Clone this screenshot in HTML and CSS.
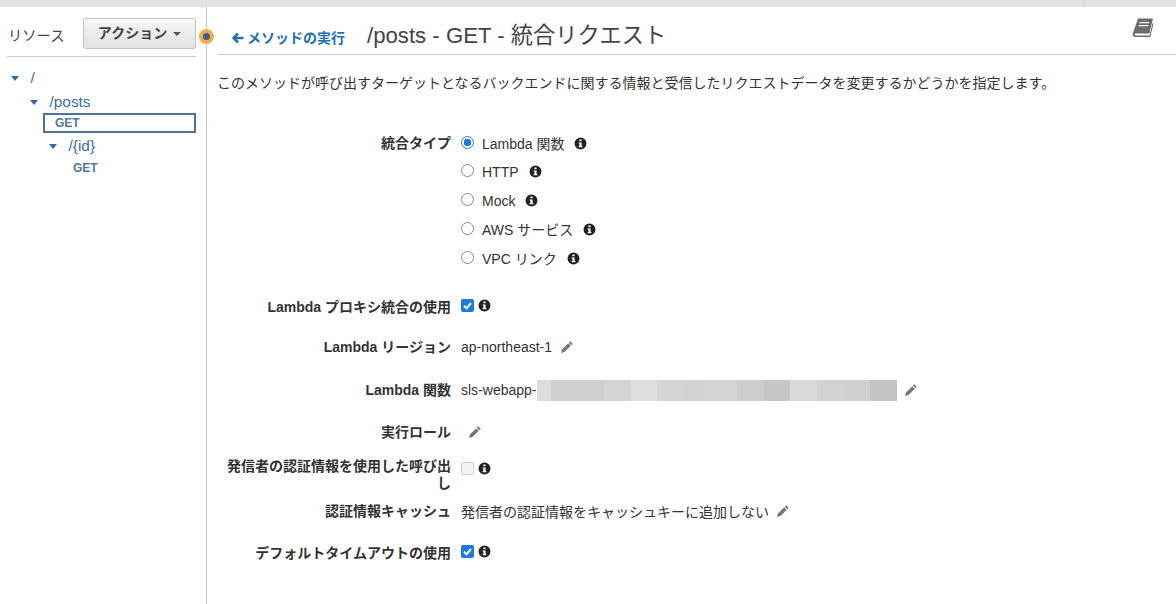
FILE: index.html
```html
<!DOCTYPE html>
<html lang="ja">
<head>
    <title>/posts - GET - 統合リクエスト</title>
    <link rel="stylesheet" href="styles.css">
</head>
<body>
    <svg class="defs" width="0" height="0">
        <symbol id="info" viewBox="0 0 12 12">
            <path fill-rule="evenodd" d="M6 .5a5.5 5.5 0 1 1 0 11 5.5 5.5 0 0 1 0-11zM5 2.2v1.7h2V2.2zM4.3 5v1.1H5v2.2h-.7v1.2h3.4V8.3H7V5z"/>
        </symbol>
        <symbol id="pencil" viewBox="0 0 14 14">
            <path d="M10.2 1.2l2.6 2.6-1.4 1.4-2.6-2.6zM8.2 3.2l2.6 2.6-6.3 6.3-3.4.8.8-3.4z"/>
        </symbol>
        <symbol id="check" viewBox="0 0 13 13">
            <path d="M3 6.8l2.5 2.5L10 4" fill="none" stroke="#fff" stroke-width="2"/>
        </symbol>
    </svg>

    <div class="top-bar"><span class="top-tick"></span></div>
    <div class="page-container">
        <aside class="sidebar">
            <div class="sidebar-head">
                <span class="sidebar-title">リソース</span>
                <button class="action-btn" type="button">アクション<span class="caret-small"></span></button>
            </div>
            <ul class="tree">
                <li class="tree-res"><span class="tree-caret"></span>/</li>
                <li class="tree-res level-1"><span class="tree-caret"></span>/posts</li>
                <li class="tree-method selected">GET</li>
                <li class="tree-res level-2"><span class="tree-caret"></span>/{id}</li>
                <li class="tree-method level-3">GET</li>
            </ul>
            <span class="resize-dot"></span>
        </aside>

        <main class="main">
            <div class="main-head">
                <a class="back-link" href="#"><span class="back-arrow">
                    <svg width="12" height="12" viewBox="0 0 12 12"><path d="M6 1.5L1.5 6 6 10.5M2 6h9.5" fill="none" stroke="currentColor" stroke-width="2.6"/></svg>
                </span>メソッドの実行</a>
                <h1>/posts - GET - 統合リクエスト</h1>
                <svg class="book" width="22" height="20" viewBox="0 0 22 20">
                    <path d="M6 .5h15l-3.6 15H3.6c-1.3 0-1.4 1.9 0 1.9h14l3-12.4.9.6-3.2 13.4H3.4C1 19 .3 17.4.8 15.4zM7.6 4l-.3 1.2h9.6l.3-1.2zM6.9 7l-.3 1.2h9.6l.3-1.2z" fill-rule="evenodd"/>
                </svg>
            </div>
            <p class="desc">このメソッドが呼び出すターゲットとなるバックエンドに関する情報と受信したリクエストデータを変更するかどうかを指定します。</p>

            <form class="settings">
                <div class="row row-type">
                    <div class="row-label">統合タイプ</div>
                    <div class="radio-list">
                        <label class="radio-item"><span class="radio on"></span>Lambda 関数<svg class="info"><use href="#info"/></svg></label>
                        <label class="radio-item"><span class="radio"></span>HTTP<svg class="info"><use href="#info"/></svg></label>
                        <label class="radio-item"><span class="radio"></span>Mock<svg class="info"><use href="#info"/></svg></label>
                        <label class="radio-item"><span class="radio"></span>AWS サービス<svg class="info"><use href="#info"/></svg></label>
                        <label class="radio-item"><span class="radio"></span>VPC リンク<svg class="info"><use href="#info"/></svg></label>
                    </div>
                </div>
                <div class="row row-proxy">
                    <div class="row-label">Lambda プロキシ統合の使用</div>
                    <div class="row-value"><span class="check on"><svg><use href="#check"/></svg></span><svg class="info tight"><use href="#info"/></svg></div>
                </div>
                <div class="row row-region">
                    <div class="row-label">Lambda リージョン</div>
                    <div class="row-value">ap-northeast-1<svg class="pencil"><use href="#pencil"/></svg></div>
                </div>
                <div class="row row-func">
                    <div class="row-label">Lambda 関数</div>
                    <div class="row-value">sls-webapp-<span class="blur">
                        <i class="b1"></i><i class="b2"></i><i class="b3"></i><i class="b4"></i><i class="b5"></i><i class="b6"></i><i class="b7"></i><i class="b8"></i><i class="b9"></i><i class="b10"></i><i class="b11"></i><i class="b12"></i><i class="b13"></i><i class="b14"></i>
                    </span><svg class="pencil"><use href="#pencil"/></svg></div>
                </div>
                <div class="row row-role">
                    <div class="row-label">実行ロール</div>
                    <div class="row-value"><svg class="pencil"><use href="#pencil"/></svg></div>
                </div>
                <div class="row row-caller">
                    <div class="row-label">発信者の認証情報を使用した呼び出し</div>
                    <div class="row-value"><span class="check"></span><svg class="info tight"><use href="#info"/></svg></div>
                </div>
                <div class="row row-cache">
                    <div class="row-label">認証情報キャッシュ</div>
                    <div class="row-value">発信者の認証情報をキャッシュキーに追加しない<svg class="pencil"><use href="#pencil"/></svg></div>
                </div>
                <div class="row row-timeout">
                    <div class="row-label">デフォルトタイムアウトの使用</div>
                    <div class="row-value"><span class="check on"><svg><use href="#check"/></svg></span><svg class="info tight"><use href="#info"/></svg></div>
                </div>
            </form>
        </main>
    </div>
</body>
</html>
```

FILE: styles.css
```css
* {
    margin: 0;
    padding: 0;
    box-sizing: border-box;
}

html, body {
    height: 100%;
    overflow: hidden;
}

body {
    font-family: 'Liberation Sans', 'Noto Sans CJK JP', sans-serif;
    font-size: 14px;
    color: #333;
    background: #fff;
}

.defs {
    position: absolute;
}

.top-bar {
    height: 7px;
    background: #e3e3e3;
    display: flex;
    justify-content: flex-end;
    padding-right: 91px;
}

.top-tick {
    width: 1px;
    background: #cfcfcf;
}

.page-container {
    display: flex;
    height: 597px;
}

/* left resource tree */
.sidebar {
    width: 207px;
    flex: none;
    padding: 10px 10px 0 7px;
    border-right: 1px solid #c8c8c8;
    position: relative;
}

.sidebar-head {
    display: flex;
    justify-content: space-between;
    align-items: flex-end;
    height: 40px;
    padding-bottom: 10px;
    padding-left: 1px;
    border-bottom: 1px solid #ccc;
}

.sidebar-title {
    font-size: 14.3px;
    line-height: 20px;
    color: #444;
}

.action-btn {
    width: 113px;
    height: 31px;
    margin-bottom: -3px;
    border: 1px solid #c4c4c4;
    border-radius: 3px;
    background: linear-gradient(#f6f6f6, #e2e2e2);
    font-family: inherit;
    font-size: 14px;
    font-weight: 700;
    color: #444;
    display: flex;
    align-items: center;
    justify-content: center;
    gap: 6px;
    padding-bottom: 3px;
}

.caret-small {
    border-left: 4px solid transparent;
    border-right: 4px solid transparent;
    border-top: 4px solid #555;
    margin-top: 3px;
}

.resize-dot {
    position: absolute;
    top: 22px;
    right: -8px;
    width: 15px;
    height: 15px;
    border-radius: 50%;
    background: #35619a;
    border: 4.5px solid #f2ac48;
}

.tree {
    list-style: none;
    color: #3d6d9e;
    padding-top: 9px;
}

.tree-res {
    height: 24px;
    line-height: 24px;
    font-size: 15.4px;
    display: flex;
    align-items: center;
    padding-left: 4px;
}

.tree-caret {
    width: 0;
    height: 0;
    margin-right: 11.5px;
    border-left: 4.5px solid transparent;
    border-right: 4.5px solid transparent;
    border-top: 5px solid #2f6aa8;
}

.level-1 {
    padding-left: 23px;
}

.level-2 {
    padding-left: 42px;
    margin-top: 1px;
}

.tree-method {
    font-size: 12px;
    font-weight: 700;
    color: #55779b;
    height: 20px;
    line-height: 18px;
}

.tree-method.selected {
    margin-left: 36px;
    padding-left: 10px;
    border: 2px solid #4f7297;
    margin-bottom: 1px;
    margin-top: -1px;
    line-height: 16px;
}

.tree-method.level-3 {
    padding-left: 66px;
    line-height: 20px;
}

/* main panel */
.main {
    flex: 1;
    padding: 0 0 0 11px;
}

.main-head {
    display: flex;
    align-items: flex-end;
    height: 48px;
    padding: 0 0 6px 14px;
    border-bottom: 1px solid #ccc;
    position: relative;
}

.back-link {
    display: flex;
    align-items: center;
    gap: 3px;
    font-size: 14px;
    font-weight: 700;
    color: #236fb3;
    text-decoration: none;
    margin-right: 22px;
    line-height: 20px;
}

.back-arrow {
    display: flex;
}

h1 {
    font-size: 22.2px;
    font-weight: 400;
    line-height: 30px;
    color: #444;
    margin-bottom: -3px;
}

.book {
    position: absolute;
    top: 11px;
    right: 22px;
    fill: #6c6c6c;
}

.desc {
    line-height: 20px;
    margin: 18px 0 0 -1px;
}

.settings {
    display: flex;
    flex-direction: column;
}

.row {
    display: grid;
    grid-template-columns: 233px 1fr;
    column-gap: 10px;
}

.row-label {
    font-weight: 700;
    text-align: right;
    line-height: 20px;
}

.row-value {
    display: flex;
    align-items: center;
    height: 20px;
}

.row-type {
    margin-top: 40px;
}

.radio-list {
    display: flex;
    flex-direction: column;
    gap: 8.75px;
}

.radio-item {
    display: flex;
    align-items: center;
    height: 20px;
}

.radio {
    width: 13px;
    height: 13px;
    border: 1px solid #8a8a8a;
    border-radius: 50%;
    background: #fff;
    margin-right: 8px;
    flex: none;
    margin-top: -2px;
}

.radio.on {
    border: 1px solid #1f7ae0;
    background: radial-gradient(circle, #1f7ae0 0 3.5px, #fff 4px);
}

.info {
    width: 13px;
    height: 13px;
    margin-left: 10px;
    fill: #222;
}

.info.tight {
    margin-left: 4px;
}

.check {
    width: 13px;
    height: 13px;
    border-radius: 2px;
    border: 1px solid #cfcfcf;
    background: #f4f4f4;
    display: block;
    margin-top: -4px;
}

.check.on {
    border: none;
    background: #1f7ae0;
}

.check svg {
    width: 13px;
    height: 13px;
    display: block;
}

.row-value .info {
    margin-top: -4px;
}

.pencil {
    width: 14px;
    height: 14px;
    margin-left: 7px;
    fill: #777;
}

.row-region .pencil,
.row-func .pencil {
    margin-left: 8px;
}

.row-proxy {
    margin-top: 29px;
}

.row-region {
    margin-top: 20px;
}

.row-func {
    margin-top: 23px;
}

.row-role {
    margin-top: 22px;
}

.row-caller {
    margin-top: 16px;
}

.row-caller .row-label {
    line-height: 17px;
}

.row-caller .row-value {
    height: 24px;
}

.row-cache {
    margin-top: 9px;
}

.row-timeout {
    margin-top: 22px;
}

/* blurred out function name */
.blur {
    display: flex;
    width: 359px;
    height: 21px;
    margin-left: 1px;
}

.blur i {
    flex: 1;
    background: #d2d2d2;
}

.blur .b1 { flex: 0.5; background: #dcdcdc; }
.blur .b2 { background: #cfcfcf; }
.blur .b3 { background: #cfcfcf; }
.blur .b4 { background: #d4d4d4; }
.blur .b5 { background: #dedede; }
.blur .b6 { background: #d6d6d6; }
.blur .b7 { background: #d3d3d3; }
.blur .b8 { background: #d6d6d6; }
.blur .b9 { background: #cecece; }
.blur .b10 { background: #c6c6c6; }
.blur .b11 { background: #dadada; }
.blur .b12 { background: #d2d2d2; }
.blur .b13 { background: #d0d0d0; }
.blur .b14 { background: #c4c4c4; }
```
